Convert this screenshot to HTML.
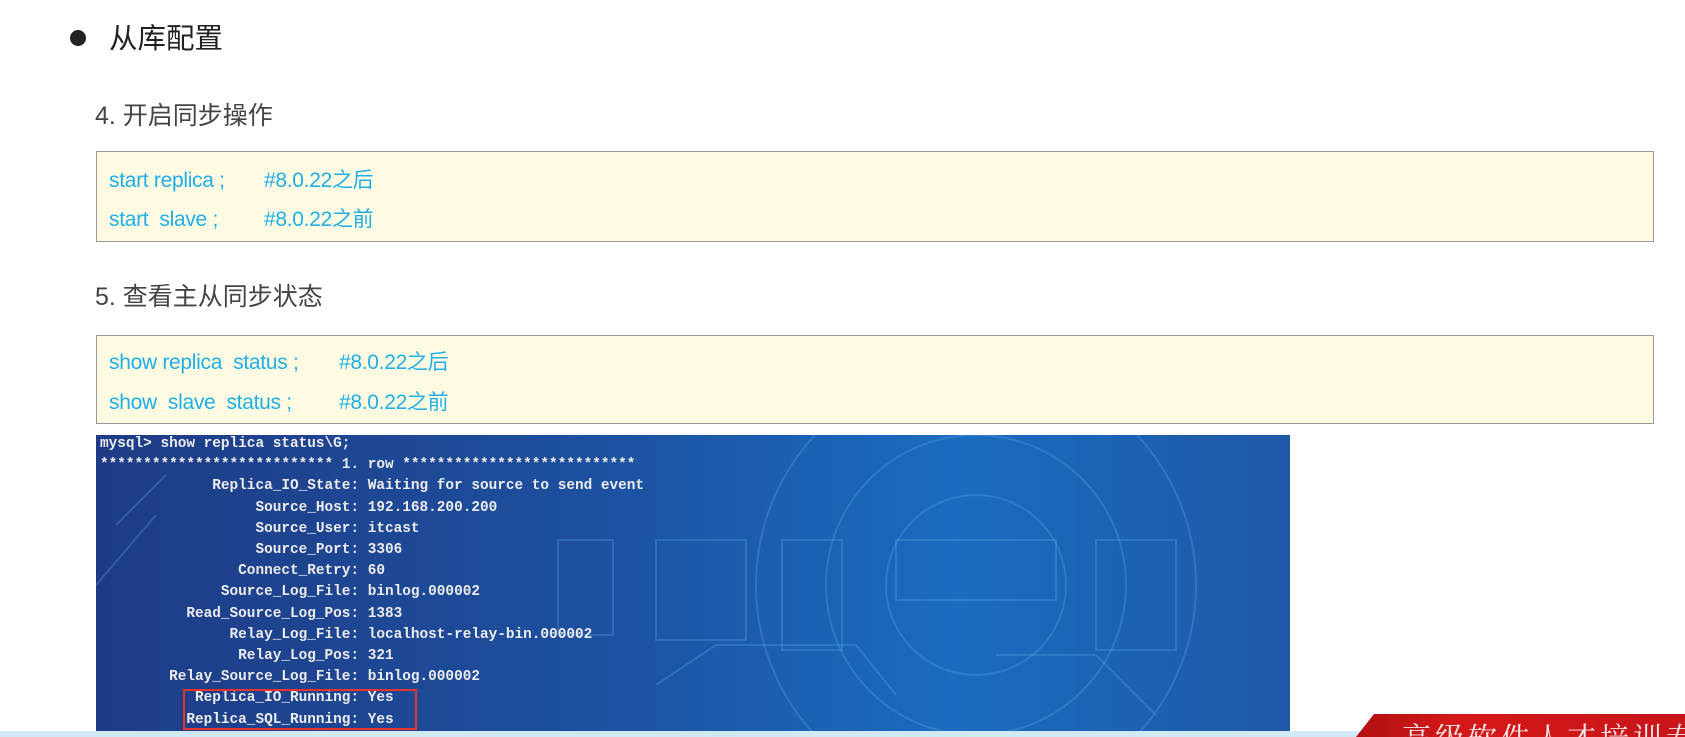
<!DOCTYPE html>
<html><head><meta charset="utf-8">
<style>
html,body{margin:0;padding:0;width:1685px;height:737px;overflow:hidden;background:#fff;position:relative;font-family:"Liberation Sans","Noto Sans CJK SC",sans-serif;}
.abs{position:absolute;}
.h1{left:109px;top:21px;font-size:28.5px;color:#222;line-height:36px;}
.dot{left:70px;top:30px;width:16px;height:16px;border-radius:50%;background:#222;}
.h2{font-size:25px;color:#444;left:95px;line-height:30px;}
.box{left:96px;width:1558px;background:#fffbe3;border:1.5px solid #999;box-sizing:border-box;}
.row{position:absolute;left:12px;font-size:21px;color:#20aee8;white-space:nowrap;line-height:26px;letter-spacing:-0.3px;}
.c{position:absolute;left:155px;}
.term{left:96px;top:435px;width:1194px;height:302px;background:linear-gradient(90deg,#1e3c86 0%,#1d4f9e 40%,#1a6cc0 72%,#1f58a6 100%);overflow:hidden;}
.tl{position:absolute;left:4px;top:-1px;font-family:"Liberation Mono",monospace;font-size:14.4px;color:#ececec;white-space:pre;font-weight:bold;line-height:21.2px;}
</style></head><body>
<div style="position:absolute;left:0;top:0;width:1685px;height:737px;overflow:hidden">
<div class="abs dot"></div>
<div class="abs h1">从库配置</div>
<div class="abs h2" style="top:101px">4. 开启同步操作</div>
<div class="abs box" style="top:151px;height:91px">
<div class="row" style="top:16px">start replica ;<span class="c">#8.0.22之后</span></div>
<div class="row" style="top:55px">start&nbsp; slave ;<span class="c">#8.0.22之前</span></div>
</div>
<div class="abs h2" style="top:282px">5. 查看主从同步状态</div>
<div class="abs box" style="top:335px;height:89px">
<div class="row" style="top:14px">show replica&nbsp; status ;<span class="c" style="left:230px">#8.0.22之后</span></div>
<div class="row" style="top:54px">show&nbsp; slave&nbsp; status ;<span class="c" style="left:230px">#8.0.22之前</span></div>
</div>
<div class="abs term">
<svg width="1194" height="302" style="position:absolute;left:0;top:0">
<g fill="none" stroke="#5aa8e8" stroke-opacity="0.3" stroke-width="2">
<circle cx="880" cy="150" r="220"/>
<circle cx="880" cy="150" r="150"/>
<circle cx="880" cy="150" r="90"/>
<rect x="462" y="105" width="55" height="95"/>
<rect x="560" y="105" width="90" height="100"/>
<rect x="686" y="105" width="60" height="110"/>
<rect x="800" y="105" width="160" height="60"/>
<rect x="1000" y="105" width="80" height="110"/>
<path d="M20 90 L70 40 M0 150 L60 80 M560 250 L620 210 L760 210 L800 260 M900 220 L1000 220 L1060 280"/>
</g>
</svg>
<div class="tl">mysql&gt; show replica status\G;
*************************** 1. row ***************************
             Replica_IO_State: Waiting for source to send event
                  Source_Host: 192.168.200.200
                  Source_User: itcast
                  Source_Port: 3306
                Connect_Retry: 60
              Source_Log_File: binlog.000002
          Read_Source_Log_Pos: 1383
               Relay_Log_File: localhost-relay-bin.000002
                Relay_Log_Pos: 321
        Relay_Source_Log_File: binlog.000002
           Replica_IO_Running: Yes
          Replica_SQL_Running: Yes</div>
<div style="position:absolute;left:87px;top:254px;width:230px;height:37px;border:2.5px solid #e8322c;"></div>
</div>
<div class="abs" style="left:0;top:731px;width:1685px;height:6px;background:#cfeaf5"></div>
<div class="abs" style="left:1356px;top:714px;width:329px;height:23px;background:linear-gradient(90deg,#b01010,#d41818 30%,#c8161a);clip-path:polygon(18px 0,100% 0,100% 100%,0 100%);overflow:hidden">
<div style="position:absolute;left:46px;top:2px;font-family:'Noto Serif CJK SC',serif;font-size:29px;color:#f4e8e8;letter-spacing:4px;white-space:nowrap">高级软件人才培训专家</div>
</div>
</div>
</body></html>
